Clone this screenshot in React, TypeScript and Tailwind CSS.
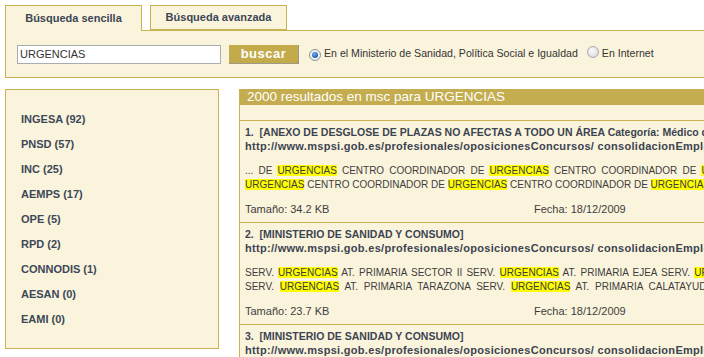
import React from "react";

const FACETS = [
  "INGESA (92)",
  "PNSD (57)",
  "INC (25)",
  "AEMPS (17)",
  "OPE (5)",
  "RPD (2)",
  "CONNODIS (1)",
  "AESAN (0)",
  "EAMI (0)",
];

const URL =
  "http://www.mspsi.gob.es/profesionales/oposicionesConcursos/ consolidacionEmpleo/docs/plazas.pdf";

const RESULTS = [
  {
    n: 1,
    title: "[ANEXO DE DESGLOSE DE PLAZAS NO AFECTAS A TODO UN ÁREA Categoría: Médico de Urgencias]",
    lines: [
      "... DE URGENCIAS CENTRO COORDINADOR DE URGENCIAS CENTRO COORDINADOR DE URGENCIAS CENTRO COORDINADOR",
      "URGENCIAS CENTRO COORDINADOR DE URGENCIAS CENTRO COORDINADOR DE URGENCIAS CENTRO COORDINADOR DE",
    ],
    spacing: ["[word-spacing:2.3px]", ""],
    size: "34.2 KB",
    date: "18/12/2009",
  },
  {
    n: 2,
    title: "[MINISTERIO DE SANIDAD Y CONSUMO]",
    lines: [
      "SERV. URGENCIAS AT. PRIMARIA SECTOR II SERV. URGENCIAS AT. PRIMARIA EJEA SERV. URGENCIAS AT. PRIMARIA",
      "SERV. URGENCIAS AT. PRIMARIA TARAZONA SERV. URGENCIAS AT. PRIMARIA CALATAYUD SERV. URGENCIAS",
    ],
    spacing: ["[word-spacing:1.4px]", "[word-spacing:3px]"],
    size: "23.7 KB",
    date: "18/12/2009",
  },
  {
    n: 3,
    title: "[MINISTERIO DE SANIDAD Y CONSUMO]",
    lines: [
      "SERV. URGENCIAS AT. PRIMARIA SECTOR I SERV. URGENCIAS AT. PRIMARIA ZARAGOZA SERV. URGENCIAS",
      "SERV. URGENCIAS AT. PRIMARIA HUESCA SERV. URGENCIAS AT. PRIMARIA BARBASTRO",
    ],
    spacing: ["", ""],
    size: "21.3 KB",
    date: "18/12/2009",
  },
];

function Marked({ text }: { text: string }) {
  const parts = text.split("URGENCIAS");
  return (
    <>
      {parts.map((p, i) => (
        <React.Fragment key={i}>
          {p}
          {i < parts.length - 1 && <span className="bg-[#ffff00]">URGENCIAS</span>}
        </React.Fragment>
      ))}
    </>
  );
}

function Radio({ checked }: { checked?: boolean }) {
  return (
    <span
      className={
        checked
          ? "inline-flex items-center justify-center w-[12px] h-[12px] rounded-full border border-[#8e959c] bg-[radial-gradient(circle,#fff_0%,#e3e6ea_100%)]"
          : "inline-block w-[12px] h-[12px] rounded-full border border-[#a3a8ad] bg-[radial-gradient(circle_at_40%_35%,#fafafa_0%,#d4d6d8_100%)]"
      }
    >
      {checked && (
        <span className="w-[6px] h-[6px] rounded-full bg-[radial-gradient(circle_at_40%_35%,#6fb0ef_0%,#1a4f9e_80%)]" />
      )}
    </span>
  );
}

export default function App() {
  return (
    <div className="w-[704px] h-[357px] overflow-hidden bg-white font-['Liberation_Sans',Arial,sans-serif] text-[#3d3d3d]">
      <div className="w-[960px] pt-[5px] pl-[5px]">
        {/* tabs */}
        <div className="flex gap-[8px] relative z-10 -mb-px">
          <div className="w-[137px] h-[26px] border border-b-0 border-[#c8b252] bg-[#fbf4dc] flex items-center justify-center text-[11px] font-bold text-[#3b4656]">
            Búsqueda sencilla
          </div>
          <div className="w-[137px] h-[25px] border border-[#c8b252] bg-[#fbf4dc] flex items-center justify-center text-[11px] font-bold text-[#3b4656]">
            Búsqueda avanzada
          </div>
        </div>

        {/* search box */}
        <div className="h-[48px] border border-[#c8b252] bg-[#fbf4dc] flex items-center pl-[11px] text-[10.6px] text-[#333]">
          <div className="w-[204px] h-[19px] border border-[#a7adb3] bg-white flex items-center pl-[2px] text-[11px] text-[#333]">
            URGENCIAS
          </div>
          <button className="ml-[8px] w-[70px] h-[19px] bg-[#c3ab4c] border-r border-b border-[#9f9a86] text-white font-bold text-[13px] tracking-[0.5px] leading-none">
            buscar
          </button>
          <span className="ml-[10px] mt-[1px]">
            <Radio checked />
          </span>
          <span className="ml-[3px]">En el Ministerio de Sanidad, Política Social e Igualdad</span>
          <span className="ml-[9px] mt-[1px]">
            <Radio />
          </span>
          <span className="ml-[3px]">En Internet</span>
        </div>

        <div className="flex gap-[20px] mt-[11px]">
          {/* facets */}
          <div className="w-[214px] h-[260px] shrink-0 border border-[#c8b252] bg-[#fbf4dc] pt-[17px] pl-[15px]">
            {FACETS.map((f) => (
              <div key={f} className="h-[25px] leading-[25px] text-[11px] font-bold text-[#3b4858]">
                {f}
              </div>
            ))}
          </div>

          {/* results */}
          <div className="flex-1 border-l border-[#c8b252] bg-[#fbf4dc]">
            <div className="h-[16px] bg-[#c4ad4f] text-white text-[13.5px] leading-[16px] pl-[7px]">
              2000 resultados en msc para URGENCIAS
            </div>
            <div className="h-[16px] border-b border-[#c8b252]" />
            {RESULTS.map((r) => (
              <div key={r.n} className="border-b border-[#c8b252] pl-[5px] pt-[4px] pb-[6px]">
                <div className="text-[10.5px] font-bold leading-[14px] text-[#3b4452] whitespace-nowrap">
                  {r.n}.&nbsp; {r.title}
                </div>
                <div className="text-[11px] font-bold leading-[14px] tracking-[0.3px] text-[#3b4452] whitespace-nowrap">
                  {URL}
                </div>
                <div className="mt-[11px] text-[10px] leading-[14px] text-[#3d3d3d] whitespace-nowrap">
                  <div className={r.spacing[0]}>
                    <Marked text={r.lines[0]} />
                  </div>
                  <div className={r.spacing[1]}>
                    <Marked text={r.lines[1]} />
                  </div>
                </div>
                <div className="mt-[10px] flex text-[11px] leading-[14px] text-[#3d3d3d]">
                  <span className="w-[289px]">Tamaño: {r.size}</span>
                  <span>Fecha: {r.date}</span>
                </div>
              </div>
            ))}
          </div>
        </div>
      </div>
    </div>
  );
}
